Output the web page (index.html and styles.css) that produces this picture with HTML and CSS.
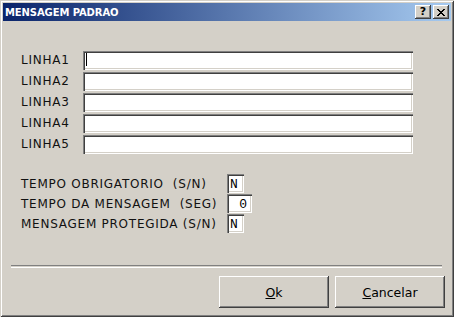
FILE: index.html
```html
<!DOCTYPE html>
<html lang="pt">
<head>
    <meta charset="UTF-8">
    <title>Mensagem Padrao</title>
    <link rel="stylesheet" href="styles.css">
</head>
<body>
    <div class="window">
        <div class="title-bar">
            <span class="title">MENSAGEM PADRAO</span>
            <div class="caption-buttons">
                <span class="cap-btn help">?</span>
                <span class="cap-btn close">
                    <svg width="8" height="7" viewBox="0 0 8 7">
                        <path d="M0 0h2v1h-2zM6 0h2v1h-2zM1 1h2v1h-2zM5 1h2v1h-2zM2 2h4v1h-4zM3 3h2v1h-2zM2 4h4v1h-4zM1 5h2v1h-2zM5 5h2v1h-2zM0 6h2v1h-2zM6 6h2v1h-2z" fill="#000"/>
                    </svg>
                </span>
            </div>
        </div>

        <div class="lines">
            <label for="linha1">LINHA1</label>
            <div class="field"><input type="text" id="linha1"><span class="caret"></span></div>
            <label for="linha2">LINHA2</label>
            <div class="field"><input type="text" id="linha2"></div>
            <label for="linha3">LINHA3</label>
            <div class="field"><input type="text" id="linha3"></div>
            <label for="linha4">LINHA4</label>
            <div class="field"><input type="text" id="linha4"></div>
            <label for="linha5">LINHA5</label>
            <div class="field"><input type="text" id="linha5"></div>
        </div>

        <div class="options">
            <div class="option">
                <label for="tempo-obr">TEMPO OBRIGATORIO&nbsp; (S/N)</label>
                <input type="text" id="tempo-obr" class="small" value="N">
            </div>
            <div class="option">
                <label for="tempo-msg">TEMPO DA MENSAGEM&nbsp; (SEG)</label>
                <input type="text" id="tempo-msg" class="small num" value="0">
            </div>
            <div class="option">
                <label for="protegida">MENSAGEM PROTEGIDA (S/N)</label>
                <input type="text" id="protegida" class="small" value="N">
            </div>
        </div>

        <div class="separator"></div>

        <div class="buttons">
            <button type="button"><u>O</u>k</button>
            <button type="button"><u>C</u>ancelar</button>
        </div>
    </div>
</body>
</html>
```

FILE: styles.css
```css
body {
    margin: 0;
    padding: 0;
    background-color: #d4d0c8;
    font-family: "DejaVu Sans", Verdana, sans-serif;
}
.window {
    width: 454px;
    height: 317px;
    box-sizing: border-box;
    padding: 3px;
    background-color: #d4d0c8;
    box-shadow: inset 1px 1px #d4d0c8, inset -1px -1px #404040, inset 2px 2px #fff, inset -2px -2px #808080;
    display: flex;
    flex-direction: column;
}
.title-bar {
    height: 18px;
    display: flex;
    align-items: center;
    justify-content: space-between;
    background: linear-gradient(to right, #0a246a, #a6caf0);
    padding-left: 2px;
    padding-right: 2px;
}
.title {
    color: #fff;
    font-weight: bold;
    font-size: 10px;
    letter-spacing: -0.1px;
}
.caption-buttons { display: flex; gap: 2px; }
.cap-btn {
    width: 16px;
    height: 14px;
    box-sizing: border-box;
    background-color: #d4d0c8;
    box-shadow: inset -1px -1px #404040, inset 1px 1px #fff, inset -2px -2px #808080;
    display: flex;
    align-items: center;
    justify-content: center;
    font-size: 11px;
    font-weight: bold;
    color: #000;
    line-height: 1;
}
.cap-btn.help { padding-bottom: 1px; }

.lines {
    margin-top: 29px;
    margin-left: 18px;
    display: grid;
    grid-template-columns: 62px 330px;
    grid-auto-rows: 19px;
    row-gap: 2px;
    align-items: center;
}
.lines label, .option label {
    font-size: 12px;
    color: #111;
    letter-spacing: 0.75px;
}
.field { position: relative; height: 19px; }
.field input, .small {
    width: 100%;
    height: 19px;
    box-sizing: border-box;
    margin: 0;
    border: none;
    padding: 0 3px;
    background-color: #fff;
    box-shadow: inset 1px 1px #808080, inset 2px 2px #404040, inset -1px -1px #fff, inset -2px -2px #d4d0c8;
    outline: none;
}
.caret {
    position: absolute;
    left: 3px;
    top: 3px;
    width: 1px;
    height: 13px;
    background-color: #000;
}

.options {
    margin-top: 21px;
    margin-left: 18px;
    display: flex;
    flex-direction: column;
    gap: 1px;
}
.option {
    display: flex;
    align-items: center;
    height: 19px;
}
.option label { width: 206px; }
.small {
    width: 17px;
    padding: 2px 0 0 3px;
    font-family: "Liberation Mono", "Courier New", monospace;
    font-size: 13px;
    color: #000;
}
.small.num {
    width: 25px;
    text-align: right;
    padding-right: 5px;
}

.separator {
    margin: 32px 9px 0 8px;
    height: 1px;
    border-top: 1px solid #808080;
    border-bottom: 1px solid #fff;
}

.buttons {
    margin-top: 8px;
    display: flex;
    justify-content: flex-end;
    gap: 6px;
    padding-right: 6px;
}
.buttons button {
    width: 110px;
    height: 32px;
    border: none;
    background-color: #d4d0c8;
    box-shadow: inset -1px -1px #404040, inset 1px 1px #fff, inset -2px -2px #808080;
    font-family: "DejaVu Sans", Verdana, sans-serif;
    font-size: 12.5px;
    color: #000;
    padding: 0;
}
```
